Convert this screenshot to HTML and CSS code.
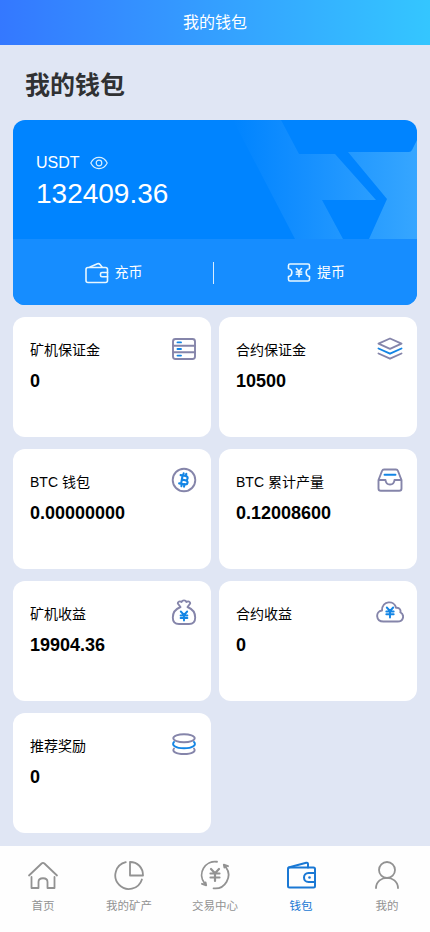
FILE: index.html
```html
<!DOCTYPE html>
<html lang="zh-CN">
<head>
<meta charset="utf-8">
<meta name="viewport" content="width=device-width, initial-scale=1">
<title>我的钱包</title>
<link rel="stylesheet" href="styles.css">
</head>
<body>
<header class="topbar">我的钱包</header>
<main class="page">
  <h1 class="title">我的钱包</h1>
  <section class="balance">
    <div class="balance-main">
      <svg class="balance-art" viewBox="0 0 184 119" aria-hidden="true">
        <defs>
          <linearGradient id="band" gradientUnits="userSpaceOnUse" x1="0" y1="0" x2="184" y2="0">
            <stop offset="0" stop-color="#0084ff"/>
            <stop offset=".35" stop-color="#138eff"/>
            <stop offset="1" stop-color="#36a6ff"/>
          </linearGradient>
        </defs>
        <path fill="url(#band)" d="M0 0H48L66 34H102L143 80H89L110 119H62Z"/>
        <path fill="url(#band)" d="M115 32H176Q178 32 179 30L184 20V119H136L154 79Z"/>
      </svg>
      <div class="currency">USDT
        <svg class="eye" width="18" height="14" viewBox="0 0 18 14"><path d="M.8 7C4.500-.4 13.500-.4 17.200 7C13.500 14.400 4.500 14.400.8 7Z"/><circle cx="9" cy="7" r="2.800"/></svg>
      </div>
      <div class="amount">132409.36</div>
    </div>
    <div class="actions">
      <a class="action">
        <svg width="24" height="22" viewBox="0 0 24 22"><rect x="1" y="5.500" width="21.500" height="15" rx="2"/><path d="M5 5L12.500 1.800Q14 1.200 15 2.500L17 5M22.500 10.500H17Q15.500 10.500 15.500 12V13.200Q15.500 14.700 17 14.700H22.500"/></svg>
        <span>充币</span>
      </a>
      <a class="action">
        <svg width="24" height="20" viewBox="0 0 24 20"><path d="M3 1H21Q22.500 1 22.500 2.500V5.500C18 6.500 18 12.500 22.500 13.500V16.500Q22.500 18 21 18H3Q1.500 18 1.500 16.500V13.500C6 12.500 6 6.500 1.500 5.500V2.500Q1.500 1 3 1Z"/><path d="M9.500 5.500L12 8.500L14.500 5.500M9.300 9H14.700M9.300 11.300H14.700M12 8.500V13.800"/></svg>
        <span>提币</span>
      </a>
    </div>
  </section>
  <section class="grid">
    <article class="card">
      <div><h2>矿机保证金</h2><strong>0</strong></div>
      <svg width="28" height="28" viewBox="0 0 28 28"><rect x="3" y="4" width="22" height="20" rx="2.500"/><path d="M3 10.700H25M3 17.300H25"/><path class="blue" d="M7.500 7.400H11M7.500 14H11M7.500 20.600H11"/></svg>
    </article>
    <article class="card">
      <div><h2>合约保证金</h2><strong>10500</strong></div>
      <svg width="28" height="28" viewBox="0 0 28 28"><path d="M14 3.500L25.500 8.700L14 13.900L2.500 8.700ZM2.500 18.500L14 23.700L25.500 18.500"/><path class="blue" d="M2.500 13.500L14 18.700L25.500 13.500"/></svg>
    </article>
    <article class="card">
      <div><h2>BTC 钱包</h2><strong>0.00000000</strong></div>
      <svg width="28" height="28" viewBox="0 0 28 28"><circle cx="14" cy="13" r="11.300"/><g class="blue btc" transform="rotate(10 14 13)"><path d="M11.800 8.800V17.200M9.800 8.800H15C18 8.800 18 13 15 13H11.800M15 13C19 13 19 17.200 15 17.200H9.800M12.500 6.500V9M15.200 6.500V9M12.500 17V19.500M15.200 17V19.500"/></g></svg>
    </article>
    <article class="card">
      <div><h2>BTC 累计产量</h2><strong>0.12008600</strong></div>
      <svg width="28" height="28" viewBox="0 0 28 28"><path d="M2.500 13L6 4Q6.600 2.500 8 2.500H20Q21.400 2.500 22 4L25.500 13V21.500Q25.500 23.800 23.200 23.800H4.800Q2.500 23.800 2.500 21.500ZM2.500 13H9.500C10 19 18 19 18.500 13H25.500"/><path class="blue" d="M8.500 7.800H19.500"/></svg>
    </article>
    <article class="card">
      <div><h2>矿机收益</h2><strong>19904.36</strong></div>
      <svg width="28" height="28" viewBox="0 0 28 28"><path d="M10.500 8L7.800 4.500C7.500 2.500 10 1.800 11.500 3C12.500.8 15.500.8 16.500 3C18 1.800 20.500 2.500 20.200 4.500L17.500 8M10.500 8C5.500 10 2.800 14 2.800 18.500C2.800 23 5.500 25 9 25H19C22.500 25 25.200 23 25.200 18.500C25.200 14 22.500 10 17.500 8"/><path class="blue" d="M10.800 12.500L14 16L17.200 12.500M10.600 16.500H17.400M10.600 19H17.400M14 16V21.500"/></svg>
    </article>
    <article class="card">
      <div><h2>合约收益</h2><strong>0</strong></div>
      <svg width="28" height="28" viewBox="0 0 28 28"><path d="M7.500 22.500C-.5 22.500-.8 12.300 6 11.500C6 1.500 18.500.8 20 8.800C24 8.300 25 11.500 24.300 13.300C29 16 27.500 22.500 21.500 22.500Z"/><path class="blue" d="M10.800 8.500L14 12L17.200 8.500M10.300 12.500H17.700M10.300 15.200H17.700M14 12V18.500"/></svg>
    </article>
    <article class="card">
      <div><h2>推荐奖励</h2><strong>0</strong></div>
      <svg width="28" height="28" viewBox="0 0 28 28"><ellipse cx="14" cy="7.200" rx="10.700" ry="4"/><path d="M4 17.500C1.500 20.500 6 23 14 23S26.500 20.500 24 17.500"/><path class="blue" d="M4 11C1 14 5.500 17.300 14 17.300S27 14 24 11"/></svg>
    </article>
  </section>
</main>
<nav class="tabs">
  <a class="tab"><svg width="32" height="32" viewBox="0 0 32 32"><path d="M2 16.500L14.600 4.500Q16 3.200 17.400 4.500L30 16.500M4.500 18V29H11.500V23C11.500 18 20.500 18 20.500 23V29H27.500V18"/></svg><span>首页</span></a>
  <a class="tab"><svg width="32" height="32" viewBox="0 0 32 32"><path d="M12.800 3.200A13.600 13.600 0 1 0 28.900 20.500M17 3V16.500H30C30 8.500 24.500 3 17 3Z"/></svg><span>我的矿产</span></a>
  <a class="tab"><svg width="32" height="32" viewBox="0 0 32 32"><path d="M18 2.750A13.400 13.400 0 0 0 5.700 24.500M3 24.800L7.200 26.300L6.600 23.500M14.500 29.300A13.400 13.400 0 0 0 26.800 8M29 7.200L24.800 5.700L25.400 8.500"/><path class="yen" d="M12 10L16 14.200L20 10M11.500 14.500H20.500M11.500 18.500H20.500M16 14.200V22"/></svg><span>交易中心</span></a>
  <a class="tab active"><svg width="32" height="32" viewBox="0 0 32 32"><rect x="3" y="8.500" width="27" height="20" rx="1.500"/><path d="M3.500 8.500L21.200 3.800Q22.800 3.500 23 5V8.500M30 14H23.500C17.500 14 17.500 23 23.500 23H30"/><circle class="dot" cx="24.500" cy="18.500" r="1.300"/></svg><span>钱包</span></a>
  <a class="tab"><svg width="32" height="32" viewBox="0 0 32 32"><circle cx="16" cy="11" r="8"/><path d="M5 29C5.500 15.500 26.500 15.500 27 29"/></svg><span>我的</span></a>
</nav>
</body>
</html>
```
FILE: styles.css
```css
* { box-sizing: border-box; }
body {
  margin: 0;
  height: 932px;
  display: flex;
  flex-direction: column;
  background: #e0e6f4;
  color: #000;
  font-family: "Liberation Sans", "Noto Sans CJK SC", sans-serif;
}
svg { display: block; flex: none; fill: none; stroke-linecap: round; stroke-linejoin: round; }
.topbar {
  height: 45px;
  line-height: 45px;
  text-align: center;
  color: #fff;
  font-size: 16px;
  background: linear-gradient(90deg, #3478ff, #34c6ff);
}
.page { flex: 1; padding: 0 13px; }
.title {
  margin: 0;
  height: 75px;
  padding: 3px 0 0 12px;
  line-height: 75px;
  font-size: 25px;
  font-weight: 700;
  color: #303133;
}
.balance {
  height: 185px;
  border-radius: 12px;
  overflow: hidden;
  color: #fff;
  background: #0084ff;
}
.balance-main { position: relative; height: 119px; padding: 32px 23px 0; }
.balance-art { position: absolute; top: 0; right: 0; width: 184px; height: 119px; }
.currency { display: flex; align-items: center; gap: 10px; height: 22px; font-size: 16px; }
.eye { stroke: #d5eeff; stroke-width: 1.200; }
.amount { height: 40px; line-height: 40px; font-size: 28px; }
.actions { display: flex; height: 66px; padding-top: 2px; background: #168dff; align-items: center; }
.action {
  flex: 1;
  height: 22px;
  display: flex;
  align-items: center;
  justify-content: center;
  gap: 6px;
  font-size: 14px;
  line-height: 20px;
}
.action span { margin: -2px -1px 0 0; }
.action:first-child { flex: 0 0 201px; border-right: 1px solid #d8edff; }
.action svg { margin-top: -1px; stroke: #e8f7ff; stroke-width: 1.600; }
.grid {
  display: grid;
  grid-template-columns: 1fr 1fr;
  grid-auto-rows: 120.400px;
  gap: 11.500px 8px;
  margin-top: 12px;
}
.card {
  display: flex;
  justify-content: space-between;
  align-items: flex-start;
  padding: 18px 13px 0 17px;
  border-radius: 12px;
  background: #fff;
}
.card h2 { margin: 4px 0 0; height: 22px; line-height: 22px; font-size: 14px; font-weight: 400; }
.card strong { display: block; margin-top: 8px; line-height: 24px; font-size: 18px; }
.card svg { stroke: #8585aa; stroke-width: 1.900; }
.card svg .blue { stroke: #1385e5; }
.card svg .btc { stroke-width: 2.100; }
.tabs {
  height: 86px;
  display: flex;
  background: #fefefe;
  padding-top: 13px;
}
.tab {
  flex: 1;
  display: flex;
  flex-direction: column;
  align-items: center;
  gap: 7px;
  font-size: 11.500px;
  line-height: 17px;
  color: #929292;
}
.tab svg { stroke: #929292; stroke-width: 1.800; }
.tab .yen { stroke-width: 2.200; }
.active { color: #1a78d4; }
.active svg { stroke: #1a78d4; stroke-width: 2; }
.active .dot { fill: #1a78d4; stroke: none; }
```
